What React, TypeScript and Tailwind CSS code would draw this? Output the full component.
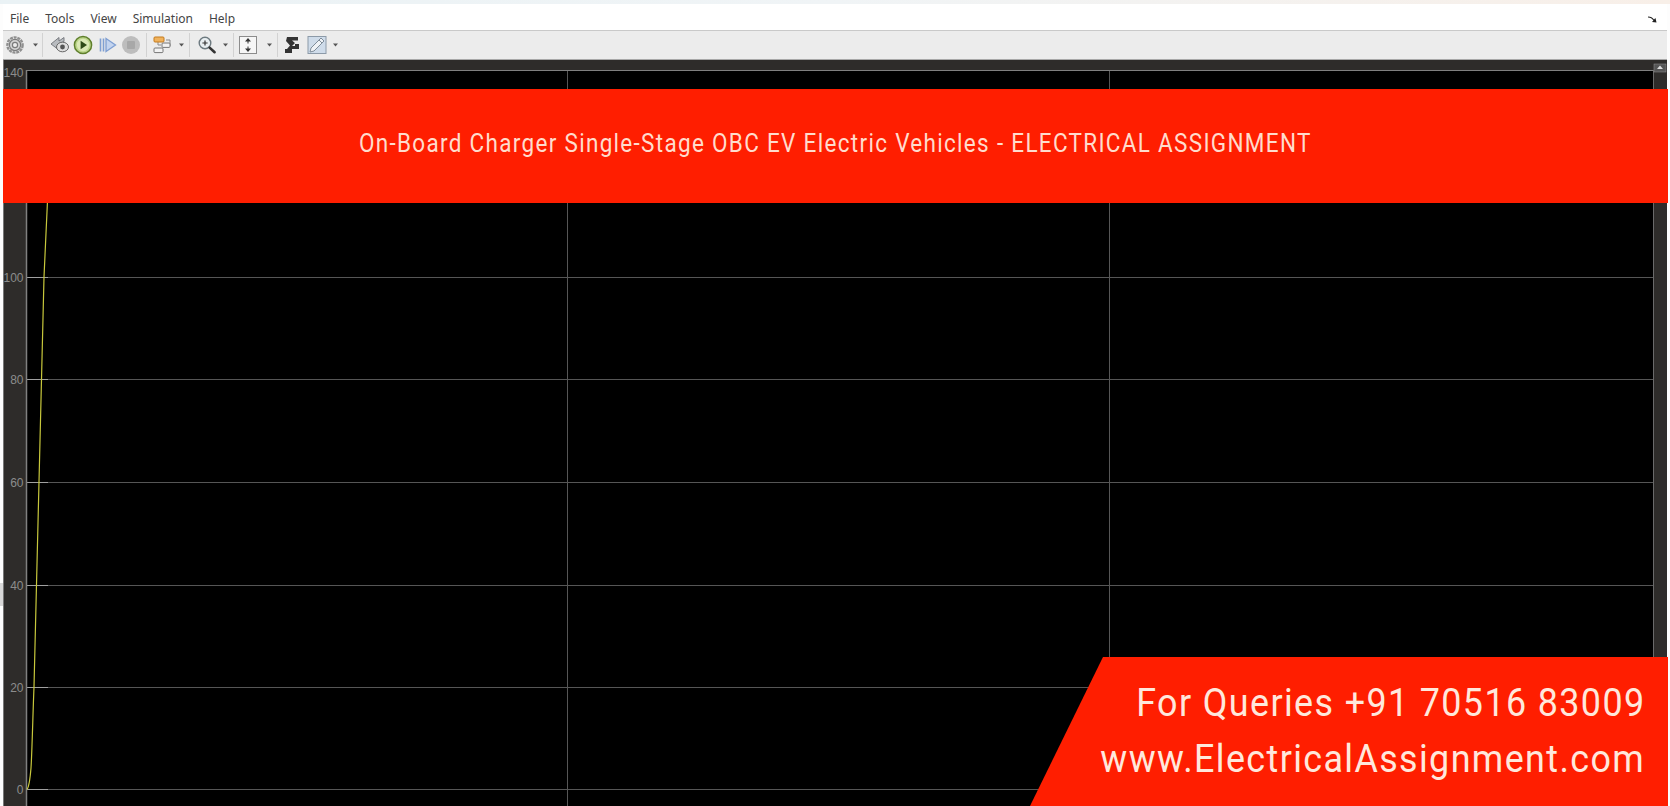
import React from "react";

const Arrow = ({ className }: { className: string }) => (
  <svg width="7" height="4" viewBox="0 0 7 4" className={className}>
    <path d="M1 .5h5L3.500 3.500z" fill="#555" />
  </svg>
);
const Sep = ({ className }: { className: string }) => <div className={`h-[24px] w-px bg-[#d2d2d2] ${className}`} />;

const Gear = () => (
  <svg width="20" height="20" viewBox="0 0 20 20">
    <circle cx="10" cy="10" r="7.6" fill="none" stroke="#8f8f8f" strokeWidth="2.4" strokeDasharray="3 .8" />
    <circle cx="10" cy="10" r="5.6" fill="#d2d2d2" stroke="#7c7c7c" strokeWidth="1.2" />
    <circle cx="10" cy="10" r="2.6" fill="#ececec" stroke="#7c7c7c" strokeWidth="1.2" />
  </svg>
);
const BackEye = () => (
  <svg width="20" height="20" viewBox="0 0 20 20">
    <path d="M1 9 9 2.500v3.500l5-3.500v4L9 9l5 3v3L9 12v3z" fill="#b9bcc0" stroke="#6f7378" strokeWidth="0.9" />
    <ellipse cx="12.500" cy="12" rx="6" ry="4.800" fill="#dedede" stroke="#666" strokeWidth="1" />
    <circle cx="12.500" cy="12" r="2.400" fill="#555" />
  </svg>
);
const Play = () => (
  <svg width="20" height="20" viewBox="0 0 20 20">
    <circle cx="10" cy="10" r="8.600" fill="#bcd58a" stroke="#5f7f2c" strokeWidth="1.500" />
    <circle cx="10" cy="10" r="6.200" fill="#dbe9b5" />
    <path d="M7.600 5.800 14 10l-6.400 4.200z" fill="#2f4a17" />
  </svg>
);
const Step = () => (
  <svg width="18" height="20" viewBox="0 0 18 20">
    <path d="M1.500 3.500v13M4.500 3.500v13" stroke="#7f9fd2" strokeWidth="1.600" />
    <path d="M7 3.500 16.500 10 7 16.500z" fill="#c3d4ef" stroke="#7f9fd2" strokeWidth="1.300" />
  </svg>
);
const Stop = () => (
  <svg width="20" height="20" viewBox="0 0 20 20">
    <circle cx="10" cy="10" r="9" fill="#bdbdbd" />
    <rect x="6" y="6" width="8" height="8" rx="1" fill="#a8a8a8" />
  </svg>
);
const Library = () => (
  <svg width="22" height="20" viewBox="0 0 22 20">
    <path d="M6 7v3h3M14 5h4v6h-4" fill="none" stroke="#8a8a8a" strokeWidth="1" />
    <rect x="2" y="2" width="10" height="5" rx="1" fill="#f0b25c" stroke="#c47a1d" />
    <rect x="10" y="8" width="8" height="4.400" rx="1" fill="#f2f2f2" stroke="#777" />
    <rect x="2" y="13" width="9" height="4.600" rx="1" fill="#f2f2f2" stroke="#777" />
  </svg>
);
const ZoomIcon = () => (
  <svg width="20" height="20" viewBox="0 0 20 20">
    <circle cx="8" cy="8" r="5.800" fill="#e8eef1" stroke="#6d7a80" strokeWidth="1.400" />
    <path d="M5.400 8h5.200M8 5.400v5.200" stroke="#333" strokeWidth="1.200" />
    <path d="m12.600 12.600 5 4.600" stroke="#333" strokeWidth="2.600" strokeLinecap="round" />
  </svg>
);
const Fit = () => (
  <svg width="20" height="20" viewBox="0 0 20 20">
    <rect x="1.500" y="1.500" width="17" height="17" fill="#f6f6f6" stroke="#8c8c8c" />
    <path d="M10 3 7 6.600h6zM10 17l-3-3.600h6z" fill="#333" />
    <path d="M10 6v2.500M10 11.500V14" stroke="#333" />
  </svg>
);
const Scope = () => (
  <svg width="18" height="20" viewBox="0 0 18 20">
    <path d="M4 2h11v3.500H9L12 8l-3 3h3V9h4v5H9v4H2v-4h2l3-3.500L3 6z" fill="#333" />
  </svg>
);
const Pen = () => (
  <svg width="20" height="20" viewBox="0 0 20 20">
    <rect x="1" y="1.500" width="18" height="17" fill="#cfdcea" stroke="#8c9aa8" />
    <path d="m3 17 1-4L14 3l3 3L7 16z" fill="#eef2f6" stroke="#7f8d9a" />
    <path d="m12 5 3 3" stroke="#7f8d9a" />
  </svg>
);

const ticks: [string, number, number][] = [
  ["140", 70, 7],
  ["120", 174, 4],
  ["100", 277, 5],
  ["80", 379, 5],
  ["60", 482, 5],
  ["40", 585, 5],
  ["20", 687, 5],
  ["0", 789, 5],
];

const Scale = () => (
  <svg width="1663" height="746" viewBox="0 0 1663 746" className="block">
    <rect x="22" y="10" width="1627" height="736" fill="#000" />
    {ticks.map(([label, y, dy]) => (
      <g key={label}>
        <line x1="22" x2="1649" y1={y - 60 + 0.5} y2={y - 60 + 0.5} stroke="#565656" />
        <line x1="22" x2="44" y1={y - 60 + 0.5} y2={y - 60 + 0.5} stroke="#a0a0a0" />
        <text x="19.500" y={y - 60 + dy} textAnchor="end" fontSize="12" fill="#8c8c8c" fontFamily="Liberation Sans, sans-serif">
          {label}
        </text>
      </g>
    ))}
    <line x1="563.500" x2="563.500" y1="10" y2="746" stroke="#565656" />
    <line x1="1105.500" x2="1105.500" y1="10" y2="746" stroke="#565656" />
    <line x1="22.500" x2="22.500" y1="10" y2="746" stroke="#808080" strokeWidth="1.500" />
    <line x1="1649.500" x2="1649.500" y1="10" y2="746" stroke="#6a6a6a" />
    <line x1="22" x2="1649" y1="10.500" y2="10.500" stroke="#808080" />
    <path d="M23 729.500C25 727 26 720 27 708C28 694 29 650 30 627L40 217L44 130" fill="none" stroke="#c8c83c" strokeWidth="1.200" />
    <rect x="1650" y="4" width="12" height="8" fill="#555" stroke="#888" strokeWidth="0.600" />
    <path d="M1656 5.500 1653 9h6z" fill="#ddd" />
  </svg>
);

export default function App() {
  return (
    <div className="relative flex h-[806px] w-[1670px] flex-col overflow-hidden bg-[#fdfdfd] font-['Noto_Sans',sans-serif]">
      <div className="h-[4px] w-full bg-gradient-to-r from-[#eaf2f5] via-[#f0f4f6] to-[#f8efe8]" />
      <div className="mx-[3px] flex h-[27px] items-center justify-between border-b border-[#c9c9c9] bg-white pl-[7px] pr-[10px] pt-[3px] text-[12px] text-[#444]">
        <div className="flex gap-[16px]">
          <span>File</span>
          <span>Tools</span>
          <span>View</span>
          <span>Simulation</span>
          <span>Help</span>
        </div>
        <svg width="9" height="8" viewBox="0 0 9 8">
          <path d="M0 1.500c3 0 4.500 1 6 3L7.500 3 8.500 7.500 4 7l1.400-1.500C4 3.500 2.500 2.500 0 2.500z" fill="#222" />
        </svg>
      </div>
      <div className="mx-[3px] flex h-[29px] items-center border-b border-[#a8a8a8] bg-[#ececec] pl-[2px]">
        <Gear />
        <Arrow className="ml-[7px]" />
        <Sep className="ml-[3px]" />
        <span className="ml-[7px]"><BackEye /></span>
        <span className="ml-[3px]"><Play /></span>
        <span className="ml-[6px]"><Step /></span>
        <span className="ml-[4px]"><Stop /></span>
        <Sep className="ml-[5px]" />
        <span className="ml-[5px]"><Library /></span>
        <Arrow className="ml-[4px]" />
        <Sep className="ml-[4px]" />
        <span className="ml-[7px]"><ZoomIcon /></span>
        <Arrow className="ml-[5px]" />
        <Sep className="ml-[4px]" />
        <span className="ml-[4px]"><Fit /></span>
        <Arrow className="ml-[8px]" />
        <Sep className="ml-[4px]" />
        <span className="ml-[5px]"><Scope /></span>
        <span className="ml-[6px]"><Pen /></span>
        <Arrow className="ml-[5px]" />
      </div>
      <div className="ml-[3px] mr-[3px] flex-1 border-l border-[#777] bg-[#2e2c2a]">
        <Scale />
      </div>

      <div className="absolute left-0 top-[583px] h-[23px] w-[3px] bg-[#d8d8d8]" />

      <div className="absolute left-[3px] right-[2px] top-[89px] flex h-[114px] items-center justify-center bg-[#ff1e00] pb-[5px]">
        <span className="inline-block origin-center scale-x-[0.9] whitespace-nowrap font-['Roboto',sans-serif] text-[25px] font-normal tracking-[1.450px] text-[#ffdccd]">
          On-Board Charger Single-Stage OBC EV Electric Vehicles - ELECTRICAL ASSIGNMENT
        </span>
      </div>

      <div className="absolute bottom-0 right-[2px] flex h-[149px] w-[638px] flex-col items-end gap-[20px] bg-[#ff1e00] pr-[23px] pt-[28px] font-['Roboto',sans-serif] text-[39px] font-normal leading-[36px] tracking-[1.500px] text-[#ffe8dc] [clip-path:polygon(73px_0,100%_0,100%_100%,0_100%)]">
        <span className="inline-block origin-right scale-x-[0.92] whitespace-nowrap">For Queries +91 70516 83009</span>
        <span className="inline-block origin-right scale-x-[0.92] whitespace-nowrap">www.ElectricalAssignment.com</span>
      </div>
    </div>
  );
}
